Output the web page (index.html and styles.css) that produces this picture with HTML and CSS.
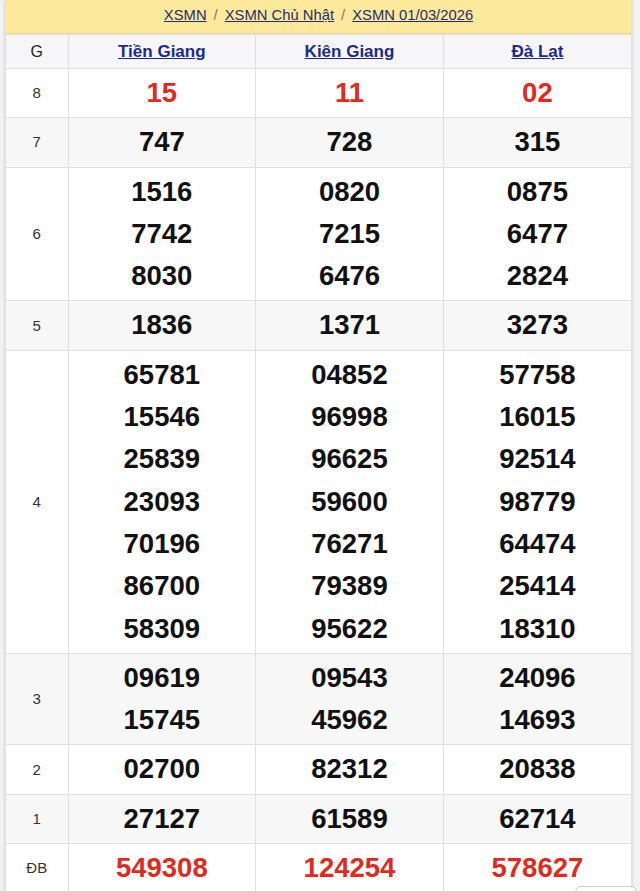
FILE: index.html
```html
<!DOCTYPE html>
<html lang="vi">
<head>
<meta charset="utf-8">
<title>XSMN 01/03/2026</title>
<link rel="stylesheet" href="styles.css">
</head>
<body>
<div class="page">
  <div class="box">
    <div class="crumbs">
      <a href="#">XSMN</a><span class="sep">/</span><a href="#">XSMN Chủ Nhật</a><span class="sep">/</span><a href="#">XSMN 01/03/2026</a>
    </div>
    <table class="kq">
      <colgroup><col class="c-g"><col class="c-p"><col class="c-p"><col class="c-p"></colgroup>
      <thead>
        <tr><th class="lbl">G</th><th><a href="#">Tiền Giang</a></th><th><a href="#">Kiên Giang</a></th><th><a href="#">Đà Lạt</a></th></tr>
      </thead>
      <tbody>
        <tr><td class="lbl">8</td><td class="red">15</td><td class="red">11</td><td class="red">02</td></tr>
        <tr class="alt"><td class="lbl">7</td><td>747</td><td>728</td><td>315</td></tr>
        <tr><td class="lbl">6</td><td><div>1516</div><div>7742</div><div>8030</div></td><td><div>0820</div><div>7215</div><div>6476</div></td><td><div>0875</div><div>6477</div><div>2824</div></td></tr>
        <tr class="alt"><td class="lbl">5</td><td>1836</td><td>1371</td><td>3273</td></tr>
        <tr><td class="lbl">4</td>
          <td><div>65781</div><div>15546</div><div>25839</div><div>23093</div><div>70196</div><div>86700</div><div>58309</div></td>
          <td><div>04852</div><div>96998</div><div>96625</div><div>59600</div><div>76271</div><div>79389</div><div>95622</div></td>
          <td><div>57758</div><div>16015</div><div>92514</div><div>98779</div><div>64474</div><div>25414</div><div>18310</div></td></tr>
        <tr class="alt"><td class="lbl">3</td><td><div>09619</div><div>15745</div></td><td><div>09543</div><div>45962</div></td><td><div>24096</div><div>14693</div></td></tr>
        <tr><td class="lbl">2</td><td>02700</td><td>82312</td><td>20838</td></tr>
        <tr class="alt"><td class="lbl">1</td><td>27127</td><td>61589</td><td>62714</td></tr>
        <tr><td class="lbl">ĐB</td><td class="red">549308</td><td class="red">124254</td><td class="red">578627</td></tr>
      </tbody>
    </table>
  </div>
  <div class="totop"></div>
</div>
</body>
</html>
```
FILE: styles.css
```css
html, body {
  margin: 0;
  padding: 0;
  background: #f2f2f2;
  overflow: hidden;
}
.page {
  position: relative;
  height: 891px;
  padding: 0 8px 0 5px;
}
.box {
  background: #fff;
  box-shadow: 0 0 3px rgba(0,0,0,0.18);
  border-left: 1px solid #e2e2e2;
  border-right: 1px solid #e2e2e2;
}
.crumbs {
  background: #fce99c;
  height: 33px;
  line-height: 31px;
  text-align: center;
  font-family: "Liberation Sans", Arial, sans-serif;
  font-size: 14.8px;
  color: #555;
  border-bottom: 1px solid #eadb9a;
}
.crumbs a {
  color: #2b2b6b;
  text-decoration: underline;
}
.crumbs .sep {
  color: #777;
  margin: 0 7px;
}
.kq {
  width: 100%;
  border-collapse: collapse;
  table-layout: fixed;
  font-family: "Liberation Sans", Arial, sans-serif;
}
.c-g { width: 62px; }
.kq th, .kq td {
  border: 1px solid #e0e0e0;
  text-align: center;
  vertical-align: middle;
}
.kq tr > :first-child { border-left: none; }
.kq tr > :last-child { border-right: none; }
.kq thead tr { background: #f6f6f8; }
.kq th {
  height: 33px;
  padding: 0;
  font-size: 17px;
  font-weight: bold;
}
.kq th a {
  color: #1b2a8c;
  text-decoration: underline;
}
.kq th.lbl {
  font-weight: normal;
  font-size: 16px;
  color: #222;
}
.kq td {
  padding: 3px 0;
  font-size: 27.5px;
  font-weight: bold;
  line-height: 42.3px;
  color: #111;
}
.kq td.lbl {
  font-size: 15px;
  font-weight: normal;
  color: #333;
  line-height: 20px;
}
.kq td.red {
  color: #dd2b22;
}
.kq tr.alt { background: #f7f7f7; }
.totop {
  position: absolute;
  left: 575px;
  top: 886px;
  width: 60px;
  height: 30px;
  background: #fff;
  border: 1px solid #ccc;
  border-radius: 6px;
}
```
